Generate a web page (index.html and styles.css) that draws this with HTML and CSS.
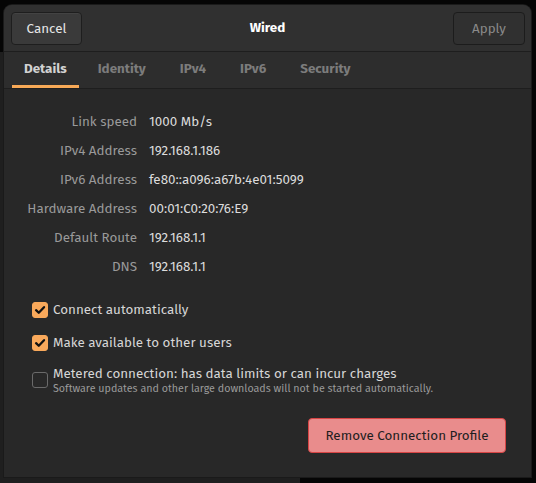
FILE: index.html
```html
<!DOCTYPE html>
<html>
<head>
<meta charset="utf-8">
<link rel="stylesheet" href="styles.css">
</head>
<body>
<div class="backdrop"></div>
<div class="window">
  <header class="headerbar">
    <button class="btn btn-cancel">Cancel</button>
    <div class="title">Wired</div>
    <button class="btn btn-apply">Apply</button>
  </header>
  <nav class="tabs">
    <span class="tab active">Details</span>
    <span class="tab">Identity</span>
    <span class="tab">IPv4</span>
    <span class="tab">IPv6</span>
    <span class="tab">Security</span>
  </nav>
  <main class="content">
    <div class="info">
      <span class="label">Link speed</span><span class="value">1000 Mb/s</span>
      <span class="label">IPv4 Address</span><span class="value">192.168.1.186</span>
      <span class="label">IPv6 Address</span><span class="value">fe80::a096:a67b:4e01:5099</span>
      <span class="label">Hardware Address</span><span class="value">00:01:C0:20:76:E9</span>
      <span class="label">Default Route</span><span class="value">192.168.1.1</span>
      <span class="label">DNS</span><span class="value">192.168.1.1</span>
    </div>
    <div class="checks">
      <label class="check">
        <span class="box checked"><svg viewBox="0 0 16 16" width="16" height="16"><path d="M3.5 8.2 L6.6 11.2 L12.6 4.8" fill="none" stroke="#111" stroke-width="2.6" stroke-linecap="round" stroke-linejoin="round"/></svg></span>
        <span class="check-text">Connect automatically</span>
      </label>
      <label class="check">
        <span class="box checked"><svg viewBox="0 0 16 16" width="16" height="16"><path d="M3.5 8.2 L6.6 11.2 L12.6 4.8" fill="none" stroke="#111" stroke-width="2.6" stroke-linecap="round" stroke-linejoin="round"/></svg></span>
        <span class="check-text">Make available to other users</span>
      </label>
      <label class="check metered">
        <span class="box"></span>
        <span class="check-text">Metered connection: has data limits or can incur charges
          <span class="sub">Software updates and other large downloads will not be started automatically.</span>
        </span>
      </label>
    </div>
    <div class="actions">
      <button class="btn btn-remove">Remove Connection Profile</button>
    </div>
  </main>
</div>
</body>
</html>
```
FILE: styles.css
```css
html, body {
  margin: 0;
  padding: 0;
}
body {
  width: 536px;
  height: 483px;
  background: #050505;
  font-family: "Fira Sans", "Noto Sans", "Open Sans", sans-serif;
  position: relative;
  overflow: hidden;
}
.backdrop {
  position: absolute;
  left: 0;
  top: 52px;
  width: 300px;
  height: 431px;
  background: #1f1f1f;
}
.window {
  position: relative;
  margin: 5px 0 0 4px;
  width: 527px;
  height: 472px;
  background: #282828;
  border-radius: 8px 8px 0 0;
  display: flex;
  flex-direction: column;
  box-shadow: 0 0 0 1px #1a1a1a;
}
.headerbar {
  height: 46px;
  background: #303030;
  border-radius: 8px 8px 0 0;
  border-bottom: 1px solid #1e1e1e;
  display: flex;
  align-items: center;
  justify-content: space-between;
  padding: 0 6px 0 7px;
}
.btn {
  font-family: inherit;
  font-size: 13.4px;
  border-radius: 4px;
  cursor: default;
}
.btn-cancel {
  width: 71px;
  height: 33px;
  background: #3a3a3a;
  color: #e6e6e6;
  border: 1px solid #1e1e1e;
  box-shadow: inset 0 1px 0 #434343;
}
.btn-apply {
  width: 72px;
  height: 33px;
  background: transparent;
  color: #8a8a8a;
  border: 1px solid #1c1c1c;
}
.title {
  color: #ffffff;
  font-weight: 700;
  font-size: 13.4px;
  margin-top: -2px;
}
.tabs {
  height: 36px;
  background: #2d2d2d;
  border-bottom: 1px solid #1e1e1e;
  display: flex;
  gap: 10px;
  padding-left: 8px;
}
.tab {
  color: #7c7c7c;
  font-weight: 700;
  font-size: 13.4px;
  padding: 0 12px;
  display: flex;
  align-items: center;
  border-bottom: 3px solid transparent;
}
.tab.active {
  color: #d2d2d2;
  border-bottom-color: #f7a957;
  margin-right: -3px;
}
.content {
  flex: 1;
  padding: 24px 25px 0 23px;
}
.info {
  display: grid;
  grid-template-columns: 110px auto;
  column-gap: 12px;
  row-gap: 11px;
  font-size: 13.4px;
  line-height: 18px;
  white-space: nowrap;
}
.label {
  text-align: right;
  color: #9a9a9a;
}
.value {
  color: #dcdcdc;
}
.checks {
  margin-top: 25px;
  padding-left: 5px;
  display: flex;
  flex-direction: column;
  gap: 15px;
}
.check {
  display: flex;
  align-items: center;
  gap: 5px;
  color: #d6d6d6;
  font-size: 13.4px;
  line-height: 18px;
}
.box {
  width: 14px;
  height: 14px;
  border: 1px solid #6a6a6a;
  border-radius: 3px;
  display: flex;
  align-items: center;
  justify-content: center;
  flex: none;
}
.box.checked {
  background: #f9a95b;
  border-color: #f9a95b;
}
.check.metered {
  margin-top: -2px;
}
.check-text {
  display: flex;
  flex-direction: column;
}
.sub {
  font-size: 10.7px;
  line-height: 11px;
  color: #9a9a9a;
}
.actions {
  display: flex;
  justify-content: flex-end;
  margin-top: 24px;
}
.btn-remove {
  width: 198px;
  height: 35px;
  background: #e98c8c;
  border: 1px solid #d84545;
  color: #1e1e1e;
}
```
